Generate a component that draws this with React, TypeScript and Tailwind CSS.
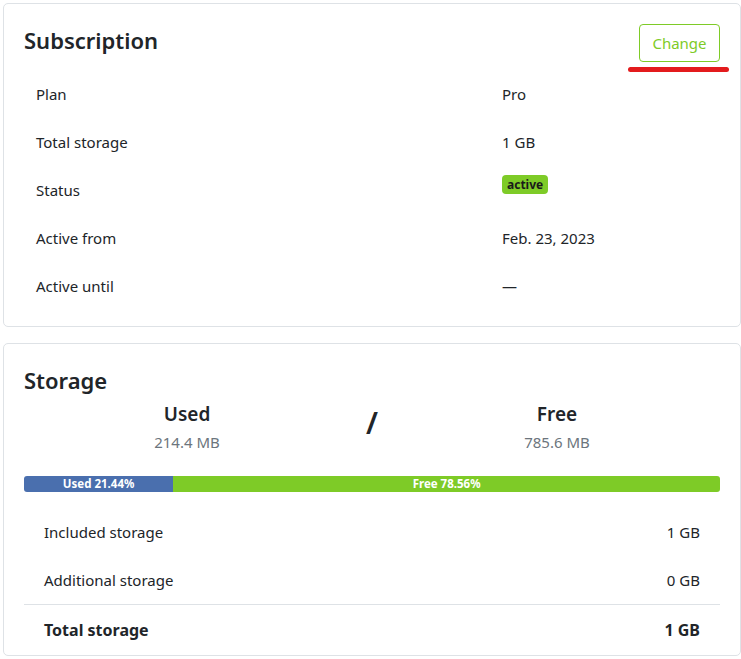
import React from "react";

const font = { fontFamily: '"Noto Sans", "Open Sans", sans-serif' };

function Row({ label, children }: { label: string; children: React.ReactNode }) {
  return (
    <div className="grid grid-cols-[466px_1fr] h-12 items-center">
      <div className="px-3 text-[15px] text-[#212529]">{label}</div>
      <div className="px-3 text-[15px] text-[#212529]">{children}</div>
    </div>
  );
}

export default function App() {
  const used = 21.44;
  return (
    <div className="bg-white min-h-[659px] pt-[3px] pl-[3px]" style={font}>
      <div className="border border-[#dee2e6] rounded-[5px] px-5 pt-5 pb-[16px] relative">
        <div className="flex items-start justify-between h-[38px]">
          <h2 className="text-[22px] font-semibold text-[#212529] leading-none mt-[5px]">Subscription</h2>
          <button className="relative h-[38px] w-[81px] border border-[#7ecb27] rounded-[4px] text-[15px] text-[#7ecb27]">
            Change
            <span className="absolute left-[-12px] right-[-10px] top-[42px] h-[5px] rounded-full bg-[#e31b1d]" />
          </button>
        </div>
        <div className="mt-[8px]">
          <Row label="Plan">Pro</Row>
          <Row label="Total storage">1 GB</Row>
          <Row label="Status">
            <span className="inline-block bg-[#7ecb27] text-[#1a1a1a] text-[12px] font-bold leading-[13px] px-[5px] py-[3px] rounded-[4px] relative top-[-7px]">
              active
            </span>
          </Row>
          <Row label="Active from">Feb. 23, 2023</Row>
          <Row label="Active until">—</Row>
        </div>
      </div>

      <div className="mt-4 border border-[#dee2e6] rounded-[5px] px-5 pt-[25px] pb-0">
        <h2 className="text-[22px] font-semibold text-[#212529] leading-none">Storage</h2>
        <div className="grid grid-cols-[326px_1fr_326px] mt-[10px] items-center">
          <div className="text-center">
            <div className="text-[19px] font-semibold text-[#212529] leading-[26px]">Used</div>
            <div className="text-[15px] text-[#6c757d] mt-[4px] leading-[22px]">214.4 MB</div>
          </div>
          <div className="text-center text-[30px] font-semibold text-[#212529] leading-none -mt-[8px]">/</div>
          <div className="text-center">
            <div className="text-[19px] font-semibold text-[#212529] leading-[26px]">Free</div>
            <div className="text-[15px] text-[#6c757d] mt-[4px] leading-[22px]">785.6 MB</div>
          </div>
        </div>
        <div className="mt-[23px] h-4 flex rounded-[3px] overflow-hidden text-white text-[11.5px] font-bold leading-4">
          <div className="bg-[#4a6fae] text-center" style={{ width: `${used}%` }}>Used 21.44%</div>
          <div className="bg-[#7ecb27] text-center flex-1">Free 78.56%</div>
        </div>
        <div className="mt-4">
          <div className="flex items-center justify-between h-12 px-5 text-[15px] text-[#212529]">
            <span>Included storage</span>
            <span>1 GB</span>
          </div>
          <div className="flex items-center justify-between h-12 px-5 text-[15px] text-[#212529]">
            <span>Additional storage</span>
            <span>0 GB</span>
          </div>
          <div className="flex items-center justify-between h-[51px] px-5 text-[16px] font-bold text-[#212529] border-t border-[#dee2e6]">
            <span>Total storage</span>
            <span>1 GB</span>
          </div>
        </div>
      </div>
    </div>
  );
}
